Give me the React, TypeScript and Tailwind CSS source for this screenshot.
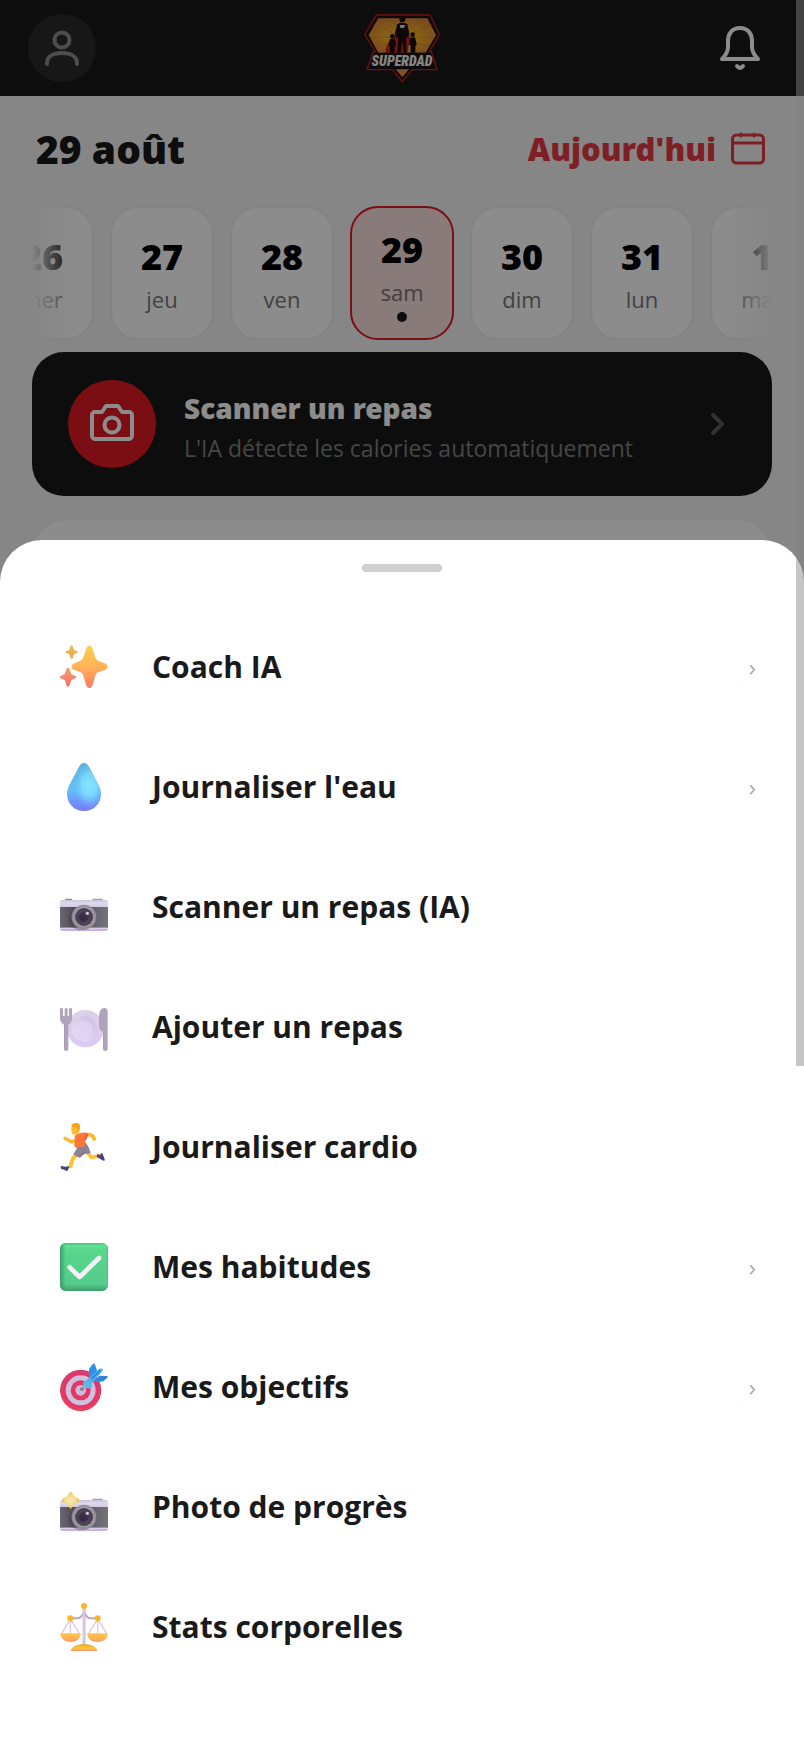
import type { ReactNode } from "react";
import clsx from "clsx";

type Day = { num: string; label: string; selected?: boolean };

const days: Day[] = [
  { num: "26", label: "mer" },
  { num: "27", label: "jeu" },
  { num: "28", label: "ven" },
  { num: "29", label: "sam", selected: true },
  { num: "30", label: "dim" },
  { num: "31", label: "lun" },
  { num: "1", label: "mar" },
];

function Glyph({ children }: { children: ReactNode }) {
  return (
    <svg viewBox="0 0 144 144" className="size-12 shrink-0" aria-hidden="true">
      {children}
    </svg>
  );
}

function Sparkles() {
  return (
    <Glyph>
      <defs>
        <linearGradient id="spark" x1="0" y1="0" x2="0" y2="1">
          <stop offset="0" stopColor="#fdd04f" />
          <stop offset="0.5" stopColor="#ffb357" />
          <stop offset="1" stopColor="#fb7a64" />
        </linearGradient>
        <linearGradient id="sparkTop" x1="0" y1="0" x2="0" y2="1">
          <stop offset="0" stopColor="#e6b94d" />
          <stop offset="1" stopColor="#f0a758" />
        </linearGradient>
        <linearGradient id="sparkLow" x1="0" y1="0" x2="0" y2="1">
          <stop offset="0" stopColor="#f0a060" />
          <stop offset="1" stopColor="#fb7070" />
        </linearGradient>
      </defs>
      <path
        fill="url(#spark)"
        d="M88 8c5 0 8 4 10 10l8 25c2 6 5 9 10 11l18 7c11 4 11 16 0 20l-18 6c-5 2-8 5-10 11l-8 27c-2 6-5 10-10 10s-8-4-10-10l-8-27c-2-6-5-9-10-11l-17-6c-11-4-11-16 0-20l17-7c5-2 8-5 10-11l8-25c2-6 5-10 10-10z"
      />
      <path fill="url(#sparkTop)" d="M35 7c2 0 3 2 4 5l3 9 9 4c3 1 3 4 0 5l-9 4-3 9c-2 6-6 6-8 0l-3-9-9-4c-3-1-3-4 0-5l9-4 3-9c1-3 2-5 4-5z" />
      <path fill="url(#sparkLow)" d="M24 74c3 0 4 3 5 6l5 14 12 5c4 2 4 5 0 7l-12 5-5 15c-2 7-8 7-10 0l-5-15-12-5c-4-2-4-5 0-7l12-5 5-14c1-3 2-6 5-6z" />
    </Glyph>
  );
}

function Droplet() {
  return (
    <Glyph>
      <defs>
        <linearGradient id="dropBase" x1="0" y1="0" x2="0" y2="1">
          <stop offset="0" stopColor="#5ab2d8" />
          <stop offset="0.55" stopColor="#66bff4" />
          <stop offset="0.8" stopColor="#6d97ff" />
          <stop offset="1" stopColor="#7b78f8" />
        </linearGradient>
        <radialGradient id="dropGlow" cx="0.66" cy="0.46" r="0.46">
          <stop offset="0" stopColor="#84e5ff" />
          <stop offset="0.5" stopColor="#7ddcff" stopOpacity="0.85" />
          <stop offset="1" stopColor="#6fc4ff" stopOpacity="0" />
        </radialGradient>
      </defs>
      {["url(#dropBase)", "url(#dropGlow)"].map((fill) => (
        <path
          key={fill}
          fill={fill}
          d="M72 0c6 0 10 3 14 10l28 52c6 11 9 21 9 31 0 29-22 51-51 51S21 122 21 93c0-10 3-20 9-31l28-52C62 3 66 0 72 0z"
        />
      ))}
    </Glyph>
  );
}

function Camera({ flash = false }: { flash?: boolean }) {
  return (
    <Glyph>
      <defs>
        <linearGradient id="camTop" x1="0" y1="0" x2="0" y2="1">
          <stop offset="0" stopColor="#c9c4d2" />
          <stop offset="0.4" stopColor="#e0d8ef" />
          <stop offset="1" stopColor="#d2c8e2" />
        </linearGradient>
        <linearGradient id="camBody" x1="0" y1="0" x2="1" y2="0">
          <stop offset="0" stopColor="#6a6672" />
          <stop offset="0.28" stopColor="#524c58" />
          <stop offset="0.75" stopColor="#66646c" />
          <stop offset="1" stopColor="#75737b" />
        </linearGradient>
        <radialGradient id="camLens" cx="0.4" cy="0.55" r="0.6">
          <stop offset="0" stopColor="#382f42" />
          <stop offset="0.6" stopColor="#51455e" />
          <stop offset="1" stopColor="#443a50" />
        </radialGradient>
        <radialGradient id="flashFill">
          <stop offset="0" stopColor="#fbe6c0" />
          <stop offset="0.6" stopColor="#f5dc8a" />
          <stop offset="1" stopColor="#e2c23c" />
        </radialGradient>
      </defs>
      {!flash && <rect x="15" y="47" width="22" height="8" rx="3" fill="#8b8792" />}
      <rect x="97" y="47" width="32" height="8" rx="3" fill="#a39fac" />
      <path fill="url(#camTop)" d="M8 51h128q8 0 8 9v14H0V60q0-9 8-9z" />
      <rect y="72" width="144" height="64" fill="url(#camBody)" />
      <path fill="#c6b3dd" d="M0 134h144q0 10-8 10H8q-8 0-8-10z" />
      <path fill="#e3d8f0" d="M0 134h144v3H0z" />
      <ellipse cx="64" cy="108" rx="38" ry="34" fill="#3f3946" opacity="0.35" />
      <circle cx="72" cy="102" r="37" fill="#918e97" />
      <circle cx="73" cy="101" r="31" fill="#a29ea8" />
      <circle cx="72" cy="102" r="27" fill="url(#camLens)" />
      <circle cx="72" cy="102" r="14" fill="#32283b" opacity="0.6" />
      <circle cx="82" cy="91" r="5" fill="#cfc8da" />
      {flash && (
        <path
          fill="url(#flashFill)"
          d="M32 27c3 0 5 4 8 9 4 6 14 9 17 13 2 2 2 3 0 5-3 4-13 7-17 13-3 5-5 10-8 10s-5-5-8-10c-4-6-14-9-17-13-2-2-2-3 0-5 3-4 13-7 17-13 3-5 5-9 8-9z"
        />
      )}
    </Glyph>
  );
}

function Plate() {
  return (
    <Glyph>
      <defs>
        <linearGradient id="plateRim" x1="0" y1="0" x2="0" y2="1">
          <stop offset="0" stopColor="#dad2e8" />
          <stop offset="1" stopColor="#dcc8f5" />
        </linearGradient>
        <linearGradient id="plateWell" x1="1" y1="0" x2="0.1" y2="1">
          <stop offset="0" stopColor="#cdbde3" />
          <stop offset="1" stopColor="#e7ddf7" />
        </linearGradient>
      </defs>
      <circle cx="76" cy="77" r="56" fill="url(#plateRim)" />
      <circle cx="73" cy="77" r="38" fill="url(#plateWell)" />
      <circle cx="70" cy="80" r="27" fill="#e2d6f4" opacity="0.7" />
      <path
        fill="#b0a4bd"
        d="M0 18q0-3 4-3t5 3v21h5V18q0-3 4-3t5 3v21h4V18q0-3 5-3t4 3v30q0 10-11 17v72q0 7-7 7t-6-7V65Q0 58 0 48z"
      />
      <path fill="#b0a4bd" d="M143 27v110q0 7-7 7t-7-7V86q-12-4-12-18V42q0-27 17-27 9 0 9 12z" />
      <path fill="#9c8fab" d="M12 66h3v70h-3zM129 86h3v50h-3z" opacity="0.5" />
    </Glyph>
  );
}

function Runner() {
  return (
    <Glyph>
      <g fill="none" strokeLinecap="round" strokeLinejoin="round">
        <path stroke="#fbb829" strokeWidth="10" d="M55 47 35 57 15 46" />
        <path stroke="#fbb829" strokeWidth="11" d="M76 35q17-2 22 4l5 9" />
        <path stroke="#fdc22e" strokeWidth="12" d="M52 90 38 108 31 130" />
        <path stroke="#fdc22e" strokeWidth="11" d="M82 88 94 103l24-4" />
      </g>
      <path fill="#ff7738" d="M50 34q16-8 28-5 8 3 6 9l-9 17 7 12q-12 14-32 8-9-4-7-12l2-15q-4-8 5-14z" />
      <path fill="#fb5c35" d="M78 30q6 1 6 8l-9 17-4-8z" />
      <path fill="#8b8497" d="M80 63q8 10 12 27l-20 4-13 10q-13-3-19-11l13-20q16 0 27-10z" />
      <path fill="#756c83" d="M76 70l-4 23-12 11-6-3 12-12z" opacity="0.5" />
      <path fill="#fdbb2f" d="M35 5q8-5 21-1 6 4 3 18-3 13-13 13-11 0-12-9 0-8 1-21z" />
      <path fill="#f4a51c" d="M34 5q9-7 21-4 7 3 5 17-5 5-8-1-4-6-15-5z" />
      <path fill="#4c4181" d="M3 129l14 2 9-2 1 5-5 10q-4 0-8-3l-11-4q-2-7 0-8z" />
      <path fill="#4c4181" d="M112 93q5 3 8 3l4-6q4 0 5 5l6 17q-4 2-8 0l-16-10q-2-5 1-9z" />
    </Glyph>
  );
}

function CheckBox() {
  return (
    <Glyph>
      <defs>
        <linearGradient id="checkFill" x1="0" y1="0" x2="0" y2="1">
          <stop offset="0" stopColor="#4dbd7c" />
          <stop offset="0.06" stopColor="#5fe293" />
          <stop offset="0.14" stopColor="#57d78c" />
          <stop offset="0.86" stopColor="#55cc8a" />
          <stop offset="1" stopColor="#3f9c70" />
        </linearGradient>
        <linearGradient id="checkSide" x1="0" y1="0" x2="1" y2="0">
          <stop offset="0" stopColor="#3f9a6e" />
          <stop offset="0.12" stopColor="#3f9a6e" stopOpacity="0" />
          <stop offset="0.94" stopColor="#62e898" stopOpacity="0" />
          <stop offset="1" stopColor="#49b07a" />
        </linearGradient>
      </defs>
      <rect width="144" height="144" rx="17" fill="url(#checkFill)" />
      <rect width="144" height="144" rx="17" fill="url(#checkSide)" />
      <path fill="none" stroke="#f5effa" strokeWidth="14" strokeLinecap="round" strokeLinejoin="round" d="m29 73 30 29 58-57" />
    </Glyph>
  );
}

function Target() {
  return (
    <Glyph>
      <defs>
        <linearGradient id="targetRim" x1="0.6" y1="0" x2="0.4" y2="1">
          <stop offset="0" stopColor="#cf3e78" />
          <stop offset="1" stopColor="#e8405a" />
        </linearGradient>
      </defs>
      <circle cx="62" cy="82" r="62" fill="url(#targetRim)" />
      <circle cx="62" cy="82" r="53" fill="#e63568" />
      <circle cx="62" cy="82" r="45" fill="#cfc0de" />
      <circle cx="62" cy="82" r="30" fill="#e63663" />
      <circle cx="62" cy="82" r="16" fill="#cdbddb" />
      <circle cx="66" cy="78" r="6" fill="#8d7a95" />
      <path fill="#3191ea" d="M87 48V18Q95 4 103 0l8 22-9 22z" />
      <path fill="#2f85de" d="M98 57 118 38l25 1q0 6-11 14-5 4-14 3z" />
      <path fill="#4db3ee" d="M70 61 118 17q6-2 10 1 2 5-2 8L88 70q-5 6-12 6-7-2-6-15z" />
      <path fill="none" stroke="#2f80d6" strokeWidth="5" strokeLinecap="round" d="m95 47 24-23" />
      <path fill="#56bbe6" d="M69 58q6-6 14-3l14 12q0 6-6 8-10 3-19-3z" />
    </Glyph>
  );
}

function Scales() {
  return (
    <Glyph>
      <defs>
        <linearGradient id="pan" x1="0" y1="0" x2="0" y2="1">
          <stop offset="0" stopColor="#ffcb45" />
          <stop offset="1" stopColor="#ff9a62" />
        </linearGradient>
        <linearGradient id="scaleBase" x1="0" y1="0" x2="0" y2="1">
          <stop offset="0" stopColor="#e9a92d" />
          <stop offset="0.6" stopColor="#fcc73d" />
          <stop offset="1" stopColor="#f79676" />
        </linearGradient>
      </defs>
      <g fill="none" stroke="#d8cadf" strokeWidth="4">
        <path d="M31 48 5 92M31 48l27 44M31 48v44M113 48 86 92M113 48l27 44M113 48v44" />
      </g>
      <path fill="none" stroke="#b6a8c4" strokeWidth="6" strokeLinejoin="round" d="M31 46h24q9-2 17-19 8 17 17 19h24" />
      <path stroke="#cdbfd8" strokeWidth="9" d="M72 16v112" />
      <path stroke="#e2d6ea" strokeWidth="3" d="M70 20v104" />
      <g fill="#fdb32b">
        <circle cx="72" cy="9" r="9" />
        <circle cx="31" cy="46" r="9" />
        <circle cx="113" cy="46" r="9" />
      </g>
      <path fill="url(#pan)" d="M0 91h63q-4 26-31 26T0 91zM81 91h63q-4 26-32 26T81 91z" />
      <path fill="url(#scaleBase)" d="M32 144q2-12 18-17 22-8 44 0 16 5 18 17z" />
    </Glyph>
  );
}

function Logo() {
  return (
    <svg viewBox="42 40 228 207" className="h-[69px] w-[76px]" role="img" aria-label="Superdad">
      <defs>
        <radialGradient id="sun" cx="0.5" cy="0.55" r="0.55">
          <stop offset="0" stopColor="#ffd21c" />
          <stop offset="0.45" stopColor="#f3b024" />
          <stop offset="1" stopColor="#e28b3a" />
        </radialGradient>
      </defs>
      <path fill="#1a1315" stroke="#c81c24" strokeWidth="4" d="M79 43h161l28 59-30 51h6l17 54h-74l-30 36-30-36H51l19-54h6L44 102z" />
      <path fill="url(#sun)" d="M85 53h147l26 50-31 53H85L56 103z" />
      <g stroke="#c9822a" strokeWidth="3" opacity="0.55">
        <path d="M157 110 70 70M157 110 100 54M157 110 128 54M157 110V54M157 110l30-56M157 110l58-56M157 110l88-38M157 110H60M157 110h98M157 110 74 138M157 110l82 30" />
      </g>
      <path fill="#d41c24" d="M140 82q-12 30-14 74h62q-4-42-17-74zM120 122q-13 14-14 34h18zM178 122q12 14 14 34h-20z" />
      <g fill="#150d0e">
        <circle cx="157" cy="56" r="9" />
        <path d="M142 70q15-8 30 0l6 28-5 14-5-4 2 48h-9l-4-36-5 36h-10l3-48-5 4-5-14z" />
        <circle cx="127" cy="107" r="7" />
        <path d="M119 116q8-5 16 0l3 18-4 4v18h-14v-18l-4-4z" />
        <circle cx="188" cy="102" r="7" />
        <path d="M180 112q8-5 16 0l4 20-4 4v20h-14v-20l-5-4z" />
      </g>
      <path fill="#ddd" d="M149 73h16l-3 9h-11z" />
      <path fill="#1a1315" d="M75 156h163l17 48H58z" />
      <text x="156" y="196" textAnchor="middle" fill="#f4f4f4" fontSize="42" fontStyle="italic" fontWeight="900" className="font-['Roboto_Condensed','Liberation_Sans_Narrow',Roboto,sans-serif]">
        SUPERDAD
      </text>
      <path fill="#e99a3c" d="M137 206h40l-20 23z" />
    </svg>
  );
}

const actions: { label: string; icon: ReactNode; more?: boolean }[] = [
  { label: "Coach IA", icon: <Sparkles />, more: true },
  { label: "Journaliser l'eau", icon: <Droplet />, more: true },
  { label: "Scanner un repas (IA)", icon: <Camera /> },
  { label: "Ajouter un repas", icon: <Plate /> },
  { label: "Journaliser cardio", icon: <Runner /> },
  { label: "Mes habitudes", icon: <CheckBox />, more: true },
  { label: "Mes objectifs", icon: <Target />, more: true },
  { label: "Photo de progrès", icon: <Camera flash /> },
  { label: "Stats corporelles", icon: <Scales /> },
];

function Header() {
  return (
    <header className="grid h-24 grid-cols-3 items-center bg-[#181818] px-7">
      <button type="button" aria-label="Profil" className="flex size-[68px] items-center justify-center rounded-full bg-[#2b2b2b]">
        <svg viewBox="0 0 40 40" className="size-10" fill="none" stroke="#8c8c8c" strokeWidth="4" strokeLinecap="round">
          <circle cx="20" cy="12" r="7.5" />
          <path d="M5 36v-1C5 28 12 25 20 25s15 3 15 10v1" />
        </svg>
      </button>
      <div className="flex justify-center">
        <Logo />
      </div>
      <button type="button" aria-label="Notifications" className="mr-3 justify-self-end">
        <svg viewBox="0 0 48 48" className="size-12" fill="none" stroke="#fff" strokeWidth="4" strokeLinecap="round" strokeLinejoin="round">
          <path d="M24 4c-8 0-12 6-12 13v6c0 5-2 8-6 12h36c-4-4-6-7-6-12v-6c0-7-4-13-12-13z" />
          <path d="M21 42c2 2.500 4 2.500 6 0" />
        </svg>
      </button>
    </header>
  );
}

function DayCard({ num, label, selected }: Day) {
  return (
    <button
      type="button"
      aria-pressed={!!selected}
      className={clsx(
        "flex h-[134px] w-26 shrink-0 flex-col items-center justify-center rounded-[28px] border-2 pt-2",
        selected ? "border-[#e11b24] bg-[#fce0e0]" : "border-[#eeeeee] bg-white"
      )}
    >
      <span className="font-['Noto_Sans',sans-serif] text-[36px] leading-[44px] font-black text-black">{num}</span>
      <span className="text-[22px] leading-[40px] text-[#777777]">{label}</span>
      {selected && <span className="mb-1 size-2.5 rounded-full bg-[#181818]" />}
    </button>
  );
}

function ScanCard() {
  return (
    <button type="button" className="mt-3 flex w-full items-center gap-7 rounded-[32px] bg-[#181818] px-9 py-7 text-left">
      <span className="flex size-22 shrink-0 items-center justify-center rounded-full bg-[#e11b24]">
        <svg viewBox="0 0 48 48" className="size-12" fill="none" stroke="#fff" strokeWidth="4" strokeLinejoin="round">
          <path d="M7 12h7l4-6h12l4 6h7a3 3 0 0 1 3 3v21a3 3 0 0 1-3 3H7a3 3 0 0 1-3-3V15a3 3 0 0 1 3-3z" />
          <circle cx="24" cy="25" r="7.5" />
        </svg>
      </span>
      <span className="flex flex-1 flex-col pt-2">
        <span className="font-['Noto_Sans',sans-serif] text-[28px] leading-10 font-black text-white">Scanner un repas</span>
        <span className="text-[23px] leading-10 text-[#808080]">L'IA détecte les calories automatiquement</span>
      </span>
      <svg viewBox="0 0 36 36" className="size-9" fill="none" stroke="#5c5c5c" strokeWidth="4" strokeLinecap="round" strokeLinejoin="round">
        <path d="m13 9 9 9-9 9" />
      </svg>
    </button>
  );
}

function ActionSheet() {
  return (
    <div role="dialog" aria-label="Actions rapides" className="flex flex-col items-center rounded-t-[42px] bg-white pt-6 pb-[61px]">
      <div className="mb-[35px] h-2 w-20 rounded-full bg-[#cfcfcf]" />
      <ul className="w-full">
        {actions.map(({ label, icon, more }) => (
          <li key={label}>
            <button type="button" className="flex h-30 w-full items-center gap-11 pr-12 pl-15 text-left">
              {icon}
              <span className="flex-1 text-[30px] leading-10 font-bold text-[#1a1a1a]">{label}</span>
              {more && <span className="text-2xl text-[#aaaaaa]">›</span>}
            </button>
          </li>
        ))}
      </ul>
    </div>
  );
}

export default function App() {
  return (
    <div className="relative h-screen overflow-hidden bg-[#f4f4f4] font-['Open_Sans','Noto_Sans',sans-serif]">
      <Header />

      <main className="px-8">
        <div className="flex h-[110px] items-center justify-between pr-1.5 pb-1 pl-1">
          <h1 className="font-['Noto_Sans',sans-serif] text-[39px] font-black text-[#181818]">29 août</h1>
          <button type="button" className="flex items-center gap-3.5 text-[#e63946]">
            <span className="font-['Noto_Sans',sans-serif] text-[31px] font-black">Aujourd'hui</span>
            <svg viewBox="0 0 36 36" className="size-9" fill="none" stroke="currentColor" strokeWidth="3" strokeLinecap="round">
              <rect x="2.5" y="4" width="31" height="28" rx="4" />
              <path d="M3 12h30M11 3v2M24 3v2" />
            </svg>
          </button>
        </div>

        <div className="relative flex justify-center gap-4 overflow-hidden">
          {days.map((day) => (
            <DayCard key={day.num} {...day} />
          ))}
          <div className="absolute inset-y-0 left-0 w-11 bg-linear-to-r from-[#f4f4f4] to-[#f4f4f4]/0" />
          <div className="absolute inset-y-0 right-0 w-11 bg-linear-to-l from-[#f4f4f4] to-[#f4f4f4]/0" />
        </div>

        <ScanCard />
        <section className="mt-6 h-60 rounded-[36px] bg-white" />
      </main>

      <div className="absolute inset-0 flex flex-col justify-end bg-black/45">
        <ActionSheet />
      </div>

      {/* overlay scrollbar thumb */}
      <div className="absolute top-0 right-0 h-[61%] w-2 bg-[#838383]/46" />
    </div>
  );
}
